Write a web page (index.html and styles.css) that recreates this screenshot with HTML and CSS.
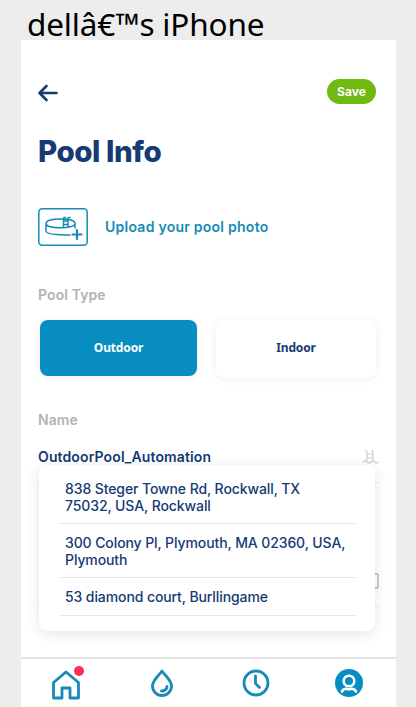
FILE: index.html
```html
<!DOCTYPE html>
<html lang="en">
<head>
<meta charset="utf-8">
<title>Pool Info</title>
<link rel="stylesheet" href="styles.css">
</head>
<body>
<h2 class="device">dellâ€™s iPhone</h2>
<main class="phone">
  <div class="content">
    <header class="topbar">
      <svg class="back" width="22" height="20" viewBox="0 0 22 20"><path d="M19.5 10H2.5M9.5 3L2.5 10L9.5 17"/></svg>
      <button class="save">Save</button>
    </header>
    <h1 class="title">Pool Info</h1>
    <div class="upload">
      <svg class="photo" width="50" height="38" viewBox="0 0 50 38">
        <rect x=".8" y=".8" width="48.4" height="36.4" rx="3.5"/>
        <path d="M8 15.500C8 9.500 37 9.500 37 15.500S8 21 8 15.500V23C8 26 17 27 32 27M37 15.500V20"/>
        <path d="M25.500 19V11Q25.500 9 27.500 9.500M30 19V11Q30 9 32 9.500M25.500 13H30M25.500 16.500H30"/>
        <path class="plus" d="M39 22V31M34.500 26.500H43.500"/>
      </svg>
      <span class="upload-text">Upload your pool photo</span>
    </div>
    <div class="label type-label">Pool Type</div>
    <div class="types">
      <button class="type selected">Outdoor</button>
      <button class="type">Indoor</button>
    </div>
    <div class="label name-label">Name</div>
    <section class="fields">
      <div class="field name-field">
        <span class="value">OutdoorPool_Automation</span>
        <svg class="ladder" width="17" height="16" viewBox="0 0 17 16"><path d="M5 12V3Q5 1 3.500 2M11 12V3Q11 1 9.500 2M5 5H11M5 9H11M1 13Q3 11 5 13T9 13T13 13T16 13"/></svg>
      </div>
      <div class="field address-field">
        <svg width="14" height="16" viewBox="0 0 14 16"><rect x="1" y="1" width="12" height="14" rx="1"/></svg>
      </div>
      <ul class="suggestions">
        <li>838 Steger Towne Rd, Rockwall, TX<br>75032, USA, Rockwall</li>
        <li>300 Colony Pl, Plymouth, MA 02360, USA,<br>Plymouth</li>
        <li>53 diamond court, Burllingame</li>
      </ul>
    </section>
  </div>
  <nav class="tabs">
    <a class="tab home"><svg width="28" height="30" viewBox="0 0 28 30"><path d="M1.500 28V12.500L14 2L26.500 12.500V28H18V18H10V28Z"/></svg><i class="dot"></i></a>
    <a class="tab drop"><svg width="22" height="28" viewBox="0 0 22 28"><path d="M11 2C7 7.500 1.500 11.500 1.500 17A9.500 9.500 0 0 0 20.500 17C20.500 11.500 15 7.500 11 2Z"/><path d="M16 17.500Q15.500 22 10.500 22"/></svg></a>
    <a class="tab clock"><svg width="28" height="28" viewBox="0 0 28 28"><circle cx="14" cy="14" r="12"/><path d="M13.500 7V14.500L17.500 18.500"/></svg></a>
    <a class="tab profile"><svg width="28" height="28" viewBox="0 0 28 28"><circle class="disc" cx="14" cy="14" r="14"/><circle cx="14" cy="12" r="5.300"/><path d="M7 22.500Q8 19.800 11.500 19.800L14 20.500L16.500 19.800Q20 19.800 21 22.500"/></svg></a>
  </nav>
</main>
</body>
</html>
```
FILE: styles.css
```css
* { box-sizing: border-box; }
body {
  margin: 0;
  width: 416px;
  height: 707px;
  overflow: hidden;
  background: #ededed;
  color: #153a74;
  font-family: Inter, sans-serif;
}
button { border: 0; padding: 0; font-family: inherit; color: inherit; }
svg { display: block; fill: none; stroke-linecap: round; stroke-linejoin: round; }
.device {
  margin: 0;
  height: 40px;
  padding-left: 27px;
  font: 400 31.500px/48px "Noto Sans", sans-serif;
  letter-spacing: -.15px;
  color: #000;
  white-space: nowrap;
}
.phone {
  display: flex;
  flex-direction: column;
  width: 375px;
  height: 667px;
  margin-left: 21px;
  background: #fff;
}
.content { height: 617px; padding: 38px 19px 0 17px; }
.topbar { display: flex; justify-content: space-between; height: 27px; }
.back { margin-top: 5px; margin-left: -1px; stroke: #153a74; stroke-width: 2.600; }
.save {
  width: 49px;
  height: 25px;
  margin-top: 1px;
  margin-right: 1px;
  border-radius: 13px;
  background: #70b812;
  color: #fff;
  font-size: 12px;
  font-weight: 700;
  letter-spacing: .1px;
}
.title { margin: 26px 0 0; font-size: 29.5px; line-height: 40px; font-weight: 800; letter-spacing: -.45px; }
.upload { display: flex; align-items: center; height: 38px; margin-top: 37px; gap: 17px; color: #168bb8; }
.photo { stroke: #168bb8; stroke-width: 1.500; }
.plus { stroke-width: 2.200; }
.upload-text { margin-top: -1px; font-size: 14px; font-weight: 600; letter-spacing: .25px; white-space: nowrap; }
.label { font-size: 14px; font-weight: 600; line-height: 20px; letter-spacing: .1px; color: #b2b2b2; }
.type-label { margin-top: 39px; }
.types { display: flex; gap: 19px; margin-top: 15px; padding-left: 2px; }
.type {
  width: 157px;
  height: 56px;
  padding-bottom: 2px;
  border-radius: 8px;
  background: #fff;
  box-shadow: 0 1px 8px rgba(30, 30, 60, .07);
  font: 700 12px "Noto Sans", sans-serif;
  letter-spacing: -.15px;
}
.type + .type { width: 160px; height: 58px; padding-bottom: 4px; }
.type.selected { background: #078dbf; color: #fff; }
.name-label { margin-top: 32px; }
.fields { position: relative; margin-top: 17px; height: 186px; }
.field { display: flex; justify-content: space-between; border-bottom: 1px solid #eee; margin-right: -2px; }
.name-field { height: 36px; }
.value { font-size: 14px; font-weight: 600; line-height: 20px; letter-spacing: .12px; }
.ladder { margin-top: 2px; stroke: #cfcfcf; stroke-width: 1.200; }
.address-field { height: 124px; padding-top: 90px; justify-content: flex-end; }
.address-field svg { stroke: #b6b6b6; stroke-width: 1.400; }
.suggestions {
  position: absolute;
  top: 18px;
  left: 1px;
  width: 336px;
  height: 166px;
  margin: 0;
  padding: 5px 19px 5px 20px;
  list-style: none;
  background: #fff;
  border-radius: 8px;
  box-shadow: 0 3px 14px rgba(20, 20, 50, .11);
  font-size: 14px;
  line-height: 17px;
  font-weight: 500;
  letter-spacing: -.1px;
}
.suggestions li { height: 54px; padding: 10px 0 0 6px; border-bottom: 1px solid #e9e9eb; white-space: nowrap; }
.suggestions li:last-child { height: 38px; }
.tabs {
  display: flex;
  justify-content: space-between;
  height: 50px;
  border-top: 2px solid #e4e4e4;
  padding: 0 33px 0 31px;
}
.tab { position: relative; }
.tab svg { margin-top: 10px; stroke: #168bb8; stroke-width: 2.800; }
.home svg { margin-top: 11px; }
.drop, .clock { margin-left: 3px; margin-right: -3px; }
.profile svg { stroke: #fff; stroke-width: 2.600; }
.profile .disc { fill: #078dbf; stroke: none; }
.dot { position: absolute; top: 7px; right: -4px; width: 10px; height: 10px; border-radius: 50%; background: #f92f56; }
```
